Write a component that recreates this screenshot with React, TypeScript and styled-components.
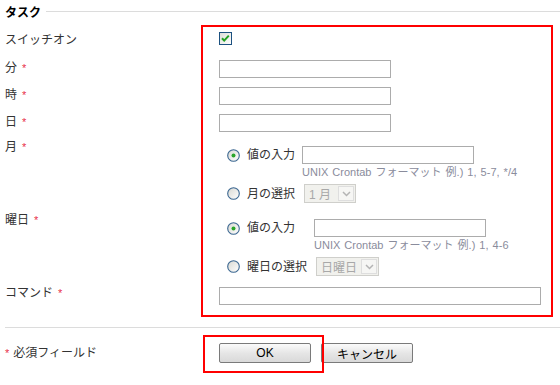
import React from "react";
import styled, { createGlobalStyle } from "styled-components";

const GlobalStyle = createGlobalStyle`
  body {
    margin: 0;
    background: #fff;
    font-family: "Liberation Sans", "Noto Sans CJK JP", sans-serif;
    font-size: 12px;
    color: #333;
  }
`;

const Page = styled.div`
  width: 555px;
  padding: 0 0 24px 5px;
`;

const Header = styled.div`
  display: flex;
  align-items: center;
  height: 22px;
  gap: 5px;
`;

const Title = styled.h2`
  margin: 0;
  font-size: 12px;
  font-weight: bold;
  color: #000;
`;

const Rule = styled.div`
  flex: 1;
  height: 1px;
  background: #dcdcdc;
`;

const FormGrid = styled.div`
  display: grid;
  grid-template-columns: 196px minmax(0, 1fr);
  margin-top: 3px;
`;

// red annotation frame spanning the whole field column
const Highlight = styled.div`
  grid-column: 2;
  grid-row: 1 / 8;
  border: 2px solid #ff0000;
  margin-right: 7px;
  pointer-events: none;
`;

const Label = styled.div<{ $row: number; $top: number }>`
  grid-column: 1;
  grid-row: ${(p) => p.$row};
  padding-top: ${(p) => p.$top}px;
  line-height: 16px;
  color: #333;
`;

const Req = styled.span`
  color: #e8304a;
  margin-left: 5px;
  font-size: 11px;
`;

const Field = styled.div<{ $row: number; $top: number; $bottom?: number }>`
  grid-column: 2;
  grid-row: ${(p) => p.$row};
  padding: ${(p) => p.$top}px 0 ${(p) => p.$bottom ?? 0}px 18px;
  display: flex;
  flex-direction: column;
`;

const TextInput = styled.input<{ $width: number }>`
  box-sizing: border-box;
  width: ${(p) => p.$width}px;
  height: 18px;
  border: 1px solid #acacac;
  padding: 0 3px;
  margin: 0;
  font: inherit;
`;

const Choices = styled.div`
  display: grid;
  grid-template-columns: 13px max-content max-content;
  column-gap: 7px;
  align-items: center;
  padding-left: 8px;
`;

const ChoiceLabel = styled.span`
  line-height: 16px;
  color: #333;
`;

const Hint = styled.div`
  grid-column: 3;
  font-size: 11px;
  line-height: 14px;
  word-spacing: 1px;
  margin: 1px 0 5px;
  color: #8a8c9c;
  white-space: nowrap;
`;

const FakeSelect = styled.div<{ $width: number }>`
  box-sizing: border-box;
  width: ${(p) => p.$width}px;
  height: 19px;
  display: flex;
  align-items: center;
  justify-content: space-between;
  border: 1px solid #cfcfcb;
  background: #f1f1ed;
  color: #a8a8a8;
  padding-left: 4px;
  margin-left: 2px;
`;

const ArrowBox = styled.div`
  box-sizing: border-box;
  width: 16px;
  height: 15px;
  margin-right: 1px;
  border: 1px solid #dedede;
  background: #f6f6f4;
  display: flex;
  align-items: center;
  justify-content: center;
`;

const Separator = styled.div`
  height: 1px;
  background: #dcdcdc;
  margin-top: 10px;
`;

const Footer = styled.div`
  display: grid;
  grid-template-columns: 196px minmax(0, 1fr);
  padding-top: 15px;
`;

const FootLabel = styled.div`
  line-height: 16px;
  padding-top: 2px;
  color: #333;
`;

const FootReq = styled.span`
  color: #e8304a;
  font-size: 11px;
  margin-right: 4px;
`;

const Buttons = styled.div`
  display: flex;
  align-items: flex-start;
  gap: 10px;
  padding-left: 18px;
`;

const ButtonWrap = styled.div`
  position: relative;
  display: flex;
`;

const Frame = styled.div`
  position: absolute;
  left: -16px;
  top: -8px;
  right: -13px;
  bottom: -10px;
  border: 2px solid #ff0000;
  pointer-events: none;
`;

const Button = styled.button`
  box-sizing: border-box;
  width: 92px;
  height: 20px;
  border: 1px solid #7a7a7a;
  border-radius: 2px;
  background: linear-gradient(#fbfbfb, #e6e6e6 50%, #d9d9d9);
  font: inherit;
  color: #000;
  padding: 0;
  cursor: pointer;
`;

function Checkbox() {
  return (
    <svg width="13" height="13" viewBox="0 0 13 13">
      <defs>
        <linearGradient id="cbg" x1="0" y1="0" x2="1" y2="1">
          <stop offset="0" stopColor="#dcdcd6" />
          <stop offset="1" stopColor="#ffffff" />
        </linearGradient>
      </defs>
      <rect x="0.5" y="0.5" width="12" height="12" fill="url(#cbg)" stroke="#1c5180" />
      <path d="M3 6.2 L5.2 8.6 L9.8 3.6" fill="none" stroke="#21a121" strokeWidth="2" />
    </svg>
  );
}

function Radio({ checked }: { checked?: boolean }) {
  return (
    <svg width="13" height="13" viewBox="0 0 13 13">
      <defs>
        <linearGradient id="rbg" x1="0" y1="0" x2="1" y2="1">
          <stop offset="0" stopColor="#d8d8d2" />
          <stop offset="1" stopColor="#ffffff" />
        </linearGradient>
      </defs>
      <circle cx="6.5" cy="6.5" r="5.8" fill="url(#rbg)" stroke="#3b6791" strokeWidth="1.1" />
      {checked && <circle cx="6.5" cy="6.5" r="2" fill="#2aa52a" />}
    </svg>
  );
}

function Select({ value, width }: { value: string; width: number }) {
  return (
    <FakeSelect $width={width}>
      <span>{value}</span>
      <ArrowBox>
        <svg width="9" height="6" viewBox="0 0 9 6">
          <path d="M1 1 L4.5 4.5 L8 1" fill="none" stroke="#b4b4b4" strokeWidth="1.5" />
        </svg>
      </ArrowBox>
    </FakeSelect>
  );
}

export default function App() {
  return (
    <Page>
      <GlobalStyle />
      <Header>
        <Title>タスク</Title>
        <Rule />
      </Header>

      <FormGrid>
        <Highlight />

        <Label $row={1} $top={7}>スイッチオン</Label>
        <Field $row={1} $top={7} $bottom={10}>
          <Checkbox />
        </Field>

        <Label $row={2} $top={5}>分<Req>*</Req></Label>
        <Field $row={2} $top={5} $bottom={4}>
          <TextInput $width={172} />
        </Field>

        <Label $row={3} $top={5}>時<Req>*</Req></Label>
        <Field $row={3} $top={5} $bottom={4}>
          <TextInput $width={172} />
        </Field>

        <Label $row={4} $top={5}>日<Req>*</Req></Label>
        <Field $row={4} $top={5} $bottom={4}>
          <TextInput $width={172} />
        </Field>

        <Label $row={5} $top={3}>月<Req>*</Req></Label>
        <Field $row={5} $top={10} $bottom={6}>
          <Choices>
            <Radio checked />
            <ChoiceLabel>値の入力</ChoiceLabel>
            <TextInput $width={172} />
            <Hint>UNIX Crontab フォーマット 例.) 1, 5-7, */4</Hint>
            <Radio />
            <ChoiceLabel>月の選択</ChoiceLabel>
            <Select value="1 月" width={52} />
          </Choices>
        </Field>

        <Label $row={6} $top={3}>曜日<Req>*</Req></Label>
        <Field $row={6} $top={10} $bottom={4}>
          <Choices>
            <Radio checked />
            <ChoiceLabel>値の入力</ChoiceLabel>
            <TextInput $width={172} />
            <Hint>UNIX Crontab フォーマット 例.) 1, 4-6</Hint>
            <Radio />
            <ChoiceLabel>曜日の選択</ChoiceLabel>
            <Select value="日曜日" width={63} />
          </Choices>
        </Field>

        <Label $row={7} $top={5}>コマンド<Req>*</Req></Label>
        <Field $row={7} $top={7} $bottom={12}>
          <TextInput $width={322} />
        </Field>
      </FormGrid>

      <Separator />

      <Footer>
        <FootLabel>
          <FootReq>*</FootReq>必須フィールド
        </FootLabel>
        <Buttons>
          <ButtonWrap>
            <Button>OK</Button>
            <Frame />
          </ButtonWrap>
          <Button>キャンセル</Button>
        </Buttons>
      </Footer>
    </Page>
  );
}
